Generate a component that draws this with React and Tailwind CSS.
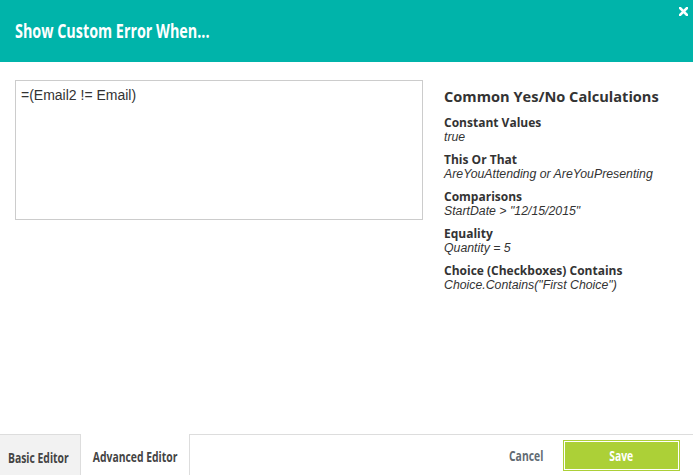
import React from 'react';

const examples = [
  { label: 'Constant Values', value: 'true' },
  { label: 'This Or That', value: 'AreYouAttending or AreYouPresenting' },
  { label: 'Comparisons', value: 'StartDate > "12/15/2015"' },
  { label: 'Equality', value: 'Quantity = 5' },
  { label: 'Choice (Checkboxes) Contains', value: 'Choice.Contains("First Choice")' },
];

// Open Sans squeezed sideways to stand in for the condensed face
function Narrow({ children, className = '' }) {
  return (
    <span className={`inline-block whitespace-nowrap font-['Open_Sans',sans-serif] font-bold scale-x-[0.74] ${className}`}>
      {children}
    </span>
  );
}

export default function App() {
  return (
    <div className="w-[693px] h-[475px] bg-white flex flex-col overflow-hidden">
      {/* header */}
      <div className="h-[62px] bg-[#00b4aa] flex items-center px-[15px] relative shrink-0">
        <h1 className="text-white text-[19.4px]">
          <Narrow className="origin-left">Show Custom Error When...</Narrow>
        </h1>
        <button className="absolute right-[5px] top-[7px]">
          <svg width="9" height="9" viewBox="0 0 9 9">
            <path d="M1 1 L8 8 M8 1 L1 8" stroke="white" strokeWidth="2.6" strokeLinecap="square" />
          </svg>
        </button>
      </div>

      {/* body */}
      <div className="flex-1 flex pt-[18px] pl-[15px]">
        <div className="w-[408px] h-[140px] border border-[#cccccc] px-[5px] py-[4px] text-[14px] text-[#333] font-['Liberation_Sans',sans-serif]">
          =(Email2 != Email)
        </div>
        <div className="ml-[21px] pt-[6px]">
          <h2 className="font-['Open_Sans',sans-serif] font-bold text-[14.6px] text-[#333] leading-[20px]">Common Yes/No Calculations</h2>
          <div className="mt-[9px] flex flex-col gap-[7px]">
            {examples.map((e) => (
              <div key={e.label} className="leading-[15px]">
                <div className="font-['Open_Sans',sans-serif] font-bold text-[12px] text-[#333]">{e.label}</div>
                <div className="font-['Liberation_Sans',sans-serif] italic text-[12.3px] text-[#333]">{e.value}</div>
              </div>
            ))}
          </div>
        </div>
      </div>

      {/* footer */}
      <div className="h-[41px] flex shrink-0">
        <div className="w-[81px] bg-[#f2f2f2] border-t border-r border-[#dddddd] flex items-center pl-[8px] text-[14px] text-[#444] pt-[5px]">
          <Narrow className="origin-left">Basic Editor</Narrow>
        </div>
        <div className="w-[109px] bg-white border-r border-[#dddddd] flex items-center justify-center text-[14px] text-[#444] pt-[3px]">
          <Narrow>Advanced Editor</Narrow>
        </div>
        <div className="flex-1 border-t border-[#dddddd] flex items-center justify-end pr-[13px]">
          <button className="text-[14px] text-[#626b73] mr-[14px]">
            <Narrow>Cancel</Narrow>
          </button>
          <button className="w-[117px] h-[31px] bg-[#acd037] border border-[#acd037] text-[14px] text-white">
            <span className="flex w-full h-full items-center justify-center border border-white">
              <Narrow>Save</Narrow>
            </span>
          </button>
        </div>
      </div>
    </div>
  );
}
